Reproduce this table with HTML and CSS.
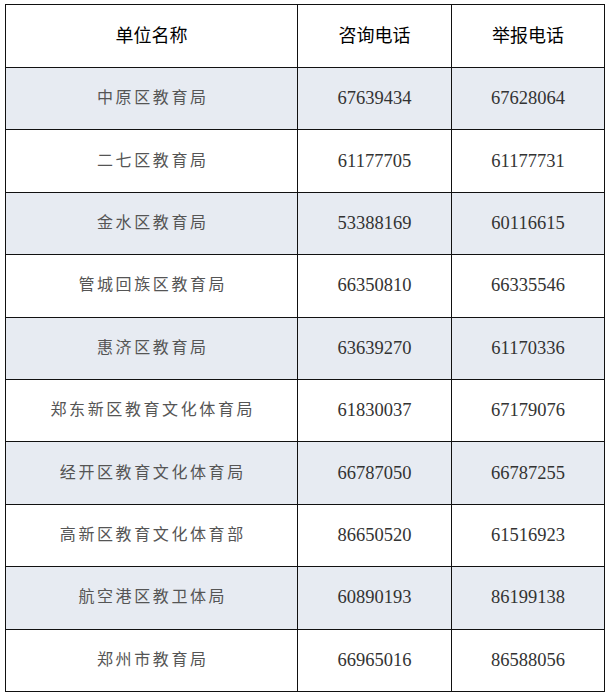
FILE: index.html
```html
<!DOCTYPE html>
<html lang="zh">
<head>
<meta charset="utf-8">
<link rel="stylesheet" href="styles.css">
</head>
<body>
<table class="contacts">
  <colgroup>
    <col class="c-name">
    <col class="c-phone">
    <col class="c-phone2">
  </colgroup>
  <thead>
    <tr class="head"><th>单位名称</th><th>咨询电话</th><th>举报电话</th></tr>
  </thead>
  <tbody>
    <tr class="alt"><td class="name">中原区教育局</td><td class="num">67639434</td><td class="num">67628064</td></tr>
    <tr><td class="name">二七区教育局</td><td class="num">61177705</td><td class="num">61177731</td></tr>
    <tr class="alt"><td class="name">金水区教育局</td><td class="num">53388169</td><td class="num">60116615</td></tr>
    <tr><td class="name">管城回族区教育局</td><td class="num">66350810</td><td class="num">66335546</td></tr>
    <tr class="alt"><td class="name">惠济区教育局</td><td class="num">63639270</td><td class="num">61170336</td></tr>
    <tr><td class="name">郑东新区教育文化体育局</td><td class="num">61830037</td><td class="num">67179076</td></tr>
    <tr class="alt"><td class="name">经开区教育文化体育局</td><td class="num">66787050</td><td class="num">66787255</td></tr>
    <tr><td class="name">高新区教育文化体育部</td><td class="num">86650520</td><td class="num">61516923</td></tr>
    <tr class="alt"><td class="name">航空港区教卫体局</td><td class="num">60890193</td><td class="num">86199138</td></tr>
    <tr><td class="name">郑州市教育局</td><td class="num">66965016</td><td class="num">86588056</td></tr>
  </tbody>
</table>
</body>
</html>
```
FILE: styles.css
```css
html, body {
  margin: 0;
  padding: 0;
  background: #ffffff;
}
body {
  padding: 4px 0 0 5px;
}
.contacts {
  border-collapse: collapse;
  table-layout: fixed;
  width: 599px;
}
.c-name { width: 292px; }
.c-phone { width: 154px; }
.c-phone2 { width: 153px; }
.contacts th,
.contacts td {
  border: 1px solid #111;
  text-align: center;
  vertical-align: middle;
  padding: 0;
}
.contacts tr.head { height: 63px; }
.contacts tbody tr { height: 62.4px; }
.contacts th {
  font-family: "Noto Sans CJK SC", "Noto Sans", sans-serif;
  font-weight: 400;
  font-size: 18px;
  color: #000;
  padding-bottom: 5px;
}
.contacts tr.alt td { background: #e7ebf2; }
.contacts td.name {
  font-family: "Noto Sans CJK SC", sans-serif;
  font-size: 16px;
  letter-spacing: 2.6px;
  text-indent: 2.6px;
  color: #555;
  font-weight: 400;
  padding-bottom: 5px;
}
.contacts td.num {
  font-family: "Liberation Serif", "Times New Roman", serif;
  font-size: 18.5px;
  color: #333;
}
```
